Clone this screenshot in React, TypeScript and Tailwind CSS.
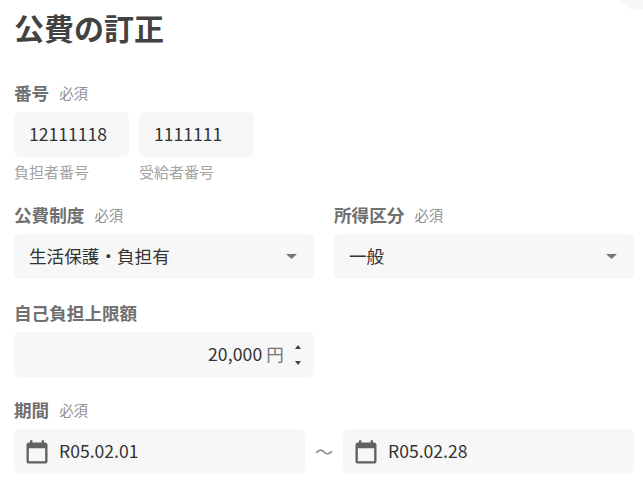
import React from "react";

const font = { fontFamily: '"Noto Sans CJK JP", "Noto Sans", sans-serif' };

function Label({ text, required }: { text: string; required?: boolean }) {
  return (
    <div className="flex h-[24px] items-center gap-[10px] mb-[7px]">
      <span className="text-[17.6px] font-bold text-[#707070] leading-[24px]">{text}</span>
      {required && <span className="text-[14.4px] text-[#8f8f8f] leading-[24px]">必須</span>}
    </div>
  );
}

function Caret() {
  return (
    <svg width="11" height="5" viewBox="0 0 11 5" className="shrink-0">
      <path d="M0 0h11L5.500 5z" fill="#757575" />
    </svg>
  );
}

function Calendar() {
  return (
    <svg width="28" height="28" viewBox="0 0 24 24" className="mt-[2px] shrink-0" fill="#616161">
      <path d="M19 3h-1V1h-2v2H8V1H6v2H5c-1.100 0-2 .9-2 2v14c0 1.100.9 2 2 2h14c1.100 0 2-.9 2-2V5c0-1.100-.9-2-2-2zm0 16H5V8h14v11z" />
    </svg>
  );
}

function Select({ value }: { value: string }) {
  return (
    <div className="flex h-[45px] w-[300px] items-center justify-between rounded-[6px] bg-[#f7f7f7] pl-[15px] pr-[17px]">
      <span className="text-[17.6px] text-[#333333]">{value}</span>
      <Caret />
    </div>
  );
}

function DateField({ value }: { value: string }) {
  return (
    <div className="flex h-[45px] w-[291px] items-center gap-[8px] rounded-[6px] bg-[#f7f7f7] pl-[9px]">
      <Calendar />
      <span className="text-[17.6px] text-[#333333]">{value}</span>
    </div>
  );
}

export default function App() {
  return (
    <div className="relative h-[484px] w-[643px] overflow-hidden bg-white pl-[14px] pr-[9px]" style={font}>
      <div className="absolute -right-[12px] -top-[26px] h-[36px] w-[36px] rounded-full bg-[#f7f7f7]" />
      <h1 className="h-[81px] pt-[5px] text-[30px] font-bold leading-[44px] text-[#424242]">公費の訂正</h1>

      <Label text="番号" required />
      <div className="flex gap-[10px]">
        <div>
          <div className="flex h-[45px] w-[115px] items-center rounded-[6px] bg-[#f7f7f7] pl-[15px] text-[17.6px] text-[#333333]">12111118</div>
          <div className="mt-[5px] text-[15px] leading-[20px] text-[#a3a3a3]">負担者番号</div>
        </div>
        <div>
          <div className="flex h-[45px] w-[115px] items-center rounded-[6px] bg-[#f7f7f7] pl-[15px] text-[17.6px] text-[#333333]">1111111</div>
          <div className="mt-[5px] text-[15px] leading-[20px] text-[#a3a3a3]">受給者番号</div>
        </div>
      </div>

      <div className="mt-[21px] flex gap-[20px]">
        <div>
          <Label text="公費制度" required />
          <Select value="生活保護・負担有" />
        </div>
        <div>
          <Label text="所得区分" required />
          <Select value="一般" />
        </div>
      </div>

      <div className="mt-[22px]">
        <Label text="自己負担上限額" />
        <div className="flex h-[45px] w-[300px] items-center justify-end gap-[11px] rounded-[6px] bg-[#f7f7f7] pr-[13px]">
          <span className="text-[17.6px] text-[#333333] tracking-[0.1px]">
            20,000 <span className="text-[#757575]">円</span>
          </span>
          <div className="flex flex-col gap-[12px]">
            <svg width="6" height="4" viewBox="0 0 6 4" className="block"><path d="M0 4h6L3 0z" fill="#424242" /></svg>
            <svg width="6" height="4" viewBox="0 0 6 4" className="block"><path d="M0 0h6L3 4z" fill="#424242" /></svg>
          </div>
        </div>
      </div>

      <div className="mt-[21px]">
        <Label text="期間" required />
        <div className="flex items-center">
          <DateField value="R05.02.01" />
          <span className="w-[38px] text-center text-[18px] text-[#8a8a8a]">～</span>
          <DateField value="R05.02.28" />
        </div>
      </div>
    </div>
  );
}
